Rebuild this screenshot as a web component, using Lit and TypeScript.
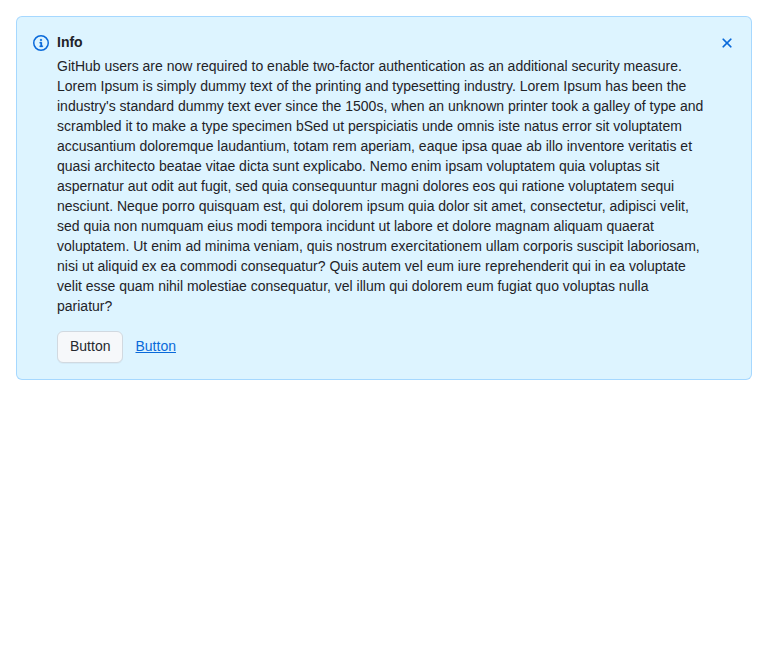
import { LitElement, html, css } from "lit";
import { customElement } from "lit/decorators.js";

@customElement("app-root")
export class AppRoot extends LitElement {
  static styles = css`
    :host {
      display: block;
      box-sizing: border-box;
      min-height: 100vh;
      padding: 16px;
      background: #ffffff;
      color: #1f2328;
      font: 14px/1.42857 "Liberation Sans", Arial, sans-serif;
    }
    .banner {
      display: grid;
      grid-template-columns: auto 1fr auto;
      box-sizing: border-box;
      padding: 8px;
      border: 1px solid #54aeff66;
      border-radius: 6px;
      background: #ddf4ff;
    }
    .icon {
      display: grid;
      padding: 8px;
      height: 20px;
      place-items: center;
      color: #0969da;
    }
    .icon svg,
    .dismiss svg {
      display: block;
      fill: currentColor;
    }
    .glyph {
      stroke: currentColor;
      stroke-width: 0.25;
    }
    .body {
      display: grid;
      row-gap: 8px;
      padding: 8px 0;
    }
    .content {
      display: grid;
      row-gap: 4px;
      padding-right: 6px;
    }
    .title {
      margin: 0;
      font-size: 14px;
      font-weight: 600;
    }
    .text {
      margin: 0;
    }
    .actions {
      display: flex;
      align-items: center;
      padding-top: 6px;
    }
    .button,
    .link,
    .dismiss {
      box-sizing: border-box;
      height: 32px;
      margin: 0;
      font: inherit;
      cursor: pointer;
    }
    .button {
      padding: 0 12px;
      border: 1px solid #d1d9e0;
      border-radius: 6px;
      background: #f6f8fa;
      color: #25292e;
      box-shadow: 0 1px 0 0 #1f23280a;
    }
    .link {
      padding: 0 12px;
      border: 0;
      background: none;
      color: #0969da;
      text-decoration: underline;
    }
    .dismiss {
      display: grid;
      place-items: center;
      width: 32px;
      margin: 2px 0 0;
      padding: 0;
      border: 0;
      border-radius: 6px;
      background: none;
      color: #0969da;
    }
  `;

  render() {
    return html`
      <section class="banner" aria-labelledby="title">
        <div class="icon">
          <svg width="16" height="16" viewBox="0 0 16 16" aria-hidden="true">
            <path d="M0 8a8 8 0 1 1 16 0A8 8 0 0 1 0 8Zm8-6.5a6.5 6.5 0 1 0 0 13 6.5 6.5 0 0 0 0-13Z"></path>
            <path class="glyph" d="M6.5 7.75A.75.75 0 0 1 7.25 7h1a.75.75 0 0 1 .75.75v2.75h.25a.75.75 0 0 1 0 1.5h-2a.75.75 0 0 1 0-1.5h.25v-2h-.25a.75.75 0 0 1-.75-.75ZM8 6a1 1 0 1 1 0-2 1 1 0 0 1 0 2Z"></path>
          </svg>
        </div>
        <div class="body">
          <div class="content">
            <h2 class="title" id="title">Info</h2>
            <p class="text">
              GitHub users are now required to enable two-factor authentication as an additional security measure.
              Lorem Ipsum is simply dummy text of the printing and typesetting industry. Lorem Ipsum has been the
              industry's standard dummy text ever since the 1500s, when an unknown printer took a galley of type and
              scrambled it to make a type specimen bSed ut perspiciatis unde omnis iste natus error sit voluptatem
              accusantium doloremque laudantium, totam rem aperiam, eaque ipsa quae ab illo inventore veritatis et
              quasi architecto beatae vitae dicta sunt explicabo. Nemo enim ipsam voluptatem quia voluptas sit
              aspernatur aut odit aut fugit, sed quia consequuntur magni dolores eos qui ratione voluptatem sequi
              nesciunt. Neque porro quisquam est, qui dolorem ipsum quia dolor sit amet, consectetur, adipisci velit,
              sed quia non numquam eius modi tempora incidunt ut labore et dolore magnam aliquam quaerat
              voluptatem. Ut enim ad minima veniam, quis nostrum exercitationem ullam corporis suscipit laboriosam,
              nisi ut aliquid ex ea commodi consequatur? Quis autem vel eum iure reprehenderit qui in ea voluptate
              velit esse quam nihil molestiae consequatur, vel illum qui dolorem eum fugiat quo voluptas nulla
              pariatur?
            </p>
          </div>
          <div class="actions">
            <button class="button">Button</button>
            <button class="link">Button</button>
          </div>
        </div>
        <button class="dismiss" aria-label="Dismiss banner">
          <svg width="16" height="16" viewBox="0 0 16 16" aria-hidden="true">
            <path class="glyph" d="M3.72 3.72a.75.75 0 0 1 1.06 0L8 6.94l3.22-3.22a.749.749 0 0 1 1.275.326.749.749 0 0 1-.215.734L9.06 8l3.22 3.22a.749.749 0 0 1-.326 1.275.749.749 0 0 1-.734-.215L8 9.06l-3.22 3.22a.751.751 0 0 1-1.042-.018.751.751 0 0 1-.018-1.042L6.94 8 3.72 4.78a.75.75 0 0 1 0-1.06Z"></path>
          </svg>
        </button>
      </section>
    `;
  }
}
